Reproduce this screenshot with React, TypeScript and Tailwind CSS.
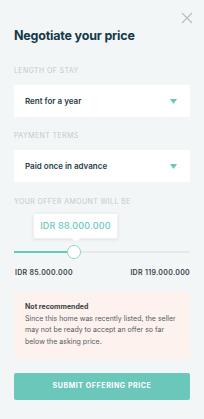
import React from "react";

const Chevron = () => (
  <svg width="7" height="5" viewBox="0 0 7 5" className="block">
    <path d="M0 0 H7 L3.5 5 Z" fill="#6cc7bb" />
  </svg>
);

export default function App() {
  return (
    <div
      className="w-[204px] h-[419px] bg-[#f3f6f7] px-[14px] relative"
      style={{ fontFamily: "Inter, 'Noto Sans', sans-serif" }}
    >
      <svg
        width="12"
        height="12"
        viewBox="0 0 12 12"
        className="absolute left-[181px] top-[12px]"
      >
        <path d="M1 1 L11 11 M11 1 L1 11" stroke="#b9bcbe" strokeWidth="1.1" />
      </svg>
      <div className="pt-[28px] text-[12.5px] font-bold text-[#15394a] leading-[16px] tracking-[-0.2px]">
        Negotiate your price
      </div>

      <div className="mt-[22px] text-[7px] tracking-[0.4px] text-[#c6c8ca] leading-[10px]">
        LENGTH OF STAY
      </div>
      <div className="mt-[9px] h-[32px] bg-white flex items-center justify-between pl-[11px] pr-[13px]">
        <span className="text-[8px] font-semibold text-[#1f3d49]">Rent for a year</span>
        <Chevron />
      </div>

      <div className="mt-[14px] text-[7px] tracking-[0.4px] text-[#c6c8ca] leading-[10px]">
        PAYMENT TERMS
      </div>
      <div className="mt-[9px] h-[32px] bg-white flex items-center justify-between pl-[11px] pr-[13px]">
        <span className="text-[8px] font-semibold text-[#1f3d49]">Paid once in advance</span>
        <Chevron />
      </div>

      <div className="mt-[15px] text-[7px] tracking-[0.4px] text-[#c6c8ca] leading-[10px]">
        YOUR OFFER AMOUNT WILL BE
      </div>

      <div className="mt-[6px] ml-[19px] w-[85px] h-[26px] bg-white relative flex items-center justify-center shadow-[0_1px_3px_rgba(0,0,0,0.08)] border border-[#eef0f1]">
        <span className="text-[9px] font-medium text-[#6cc7bb] tracking-[0.2px]">IDR 88.000.000</span>
        <div className="absolute left-[39px] -bottom-[4px] w-[6px] h-[6px] bg-white rotate-45 border-r border-b border-[#eef0f1]" />
      </div>

      <div className="mt-[6px] h-[14px] relative flex items-center">
        <div className="w-full h-[2px] bg-[#e6e8e9] flex">
          <div className="w-[60px] h-[2px] bg-[#6cc7bb]" />
        </div>
        <div className="absolute left-[53px] top-0 w-[14px] h-[14px] rounded-full bg-white border-[1.5px] border-[#8fd6cc]" />
      </div>

      <div className="mt-[9px] flex justify-between text-[7px] font-semibold text-[#3a4448] tracking-[0.3px] pl-[1px]">
        <span>IDR 85.000.000</span>
        <span>IDR 119.000.000</span>
      </div>

      <div className="mt-[13px] bg-[#fdf2ee] px-[11px] pt-[10px] pb-[12px]">
        <div className="text-[7px] font-bold text-[#3a3f42] leading-[10px]">Not recommended</div>
        <div className="mt-[1px] text-[7px] text-[#555b5e] leading-[11.5px]">
          Since this home was recently listed, the seller may not be ready to accept an offer so far
          below the asking price.
        </div>
      </div>

      <div className="mt-[14px] h-[27px] bg-[#6cc7bb] rounded-[2px] flex items-center justify-center">
        <span className="text-[7px] font-bold text-white tracking-[0.6px]">SUBMIT OFFERING PRICE</span>
      </div>
    </div>
  );
}
